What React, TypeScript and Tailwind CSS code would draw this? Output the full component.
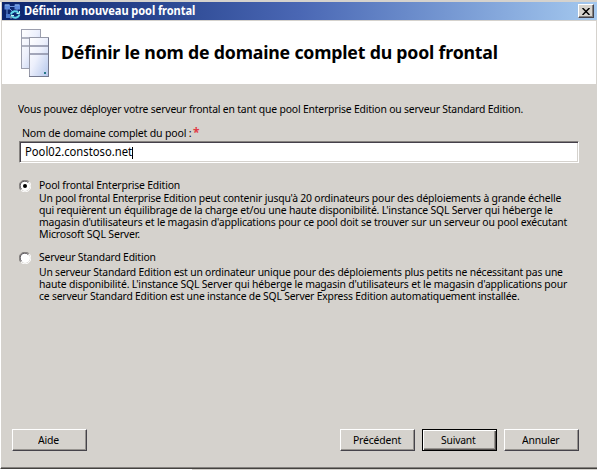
import { useLayoutEffect, useRef, useState } from "react";
import type { ReactNode } from "react";

/** One line of text, condensed horizontally to the given width. */
function FitText({ width, children, className = "" }: { width: number; children: ReactNode; className?: string }) {
  const ref = useRef<HTMLSpanElement>(null);
  const [scale, setScale] = useState(1);
  useLayoutEffect(() => {
    if (ref.current) setScale(width / ref.current.offsetWidth);
  }, [width]);
  return (
    <div className={`whitespace-nowrap ${className}`} style={{ width }}>
      <span ref={ref} className="inline-block origin-left" style={{ transform: `scaleX(${scale})` }}>
        {children}
      </span>
    </div>
  );
}

function Line({ width, children }: { width: number; children: ReactNode }) {
  return (
    <FitText width={width} className="h-3 text-[11.5px] leading-3 tracking-[-0.2px]">
      {children}
    </FitText>
  );
}

function Radio({ checked = false }: { checked?: boolean }) {
  return (
    <svg width="12" height="12" viewBox="0 0 12 12" className="mt-px shrink-0" role="radio" aria-checked={checked}>
      <circle cx="6" cy="6" r="5" fill="#fff" />
      <path d="M1.8 10.2A5.6 5.6 0 0 1 10.2 1.8" fill="none" stroke="#85827f" />
      <path d="M2.5 9.2A4.6 4.6 0 0 1 9.2 2.5" fill="none" stroke="#47434a" />
      <path d="M10.2 1.8A5.6 5.6 0 0 1 1.8 10.2" fill="none" stroke="#fff" />
      {checked && <circle cx="6" cy="6" r="2" fill="#000" />}
    </svg>
  );
}

function Button({ label, width, primary = false }: { label: string; width: number; primary?: boolean }) {
  return (
    <button
      className={`flex h-[22px] w-[75px] items-center justify-center pr-0.5 ${
        primary
          ? "border border-black shadow-[inset_1px_1px_#fff,inset_-1px_-1px_#55514f,inset_-2px_-2px_#96938f]"
          : "border border-t-white border-r-[#45434a] border-b-[#45434a] border-l-white shadow-[inset_-1px_-1px_#96938f]"
      }`}
    >
      <Line width={width}>{label}</Line>
    </button>
  );
}

function TitleIcon() {
  return (
    <svg width="17" height="17" viewBox="0 0 17 17" className="shrink-0">
      <path d="M3 5v8M5 3.5h7M5 5l5 5M13 5v4" stroke="#6f97dc" fill="none" />
      <rect x="0.5" y="1.5" width="5.5" height="5" fill="#5c8ade" />
      <rect x="10.5" y="1.5" width="5.5" height="5" fill="#5c8ade" />
      <rect x="2" y="11" width="4" height="4" fill="#4a78cc" />
      <path d="M1 2h4M11 2h4" stroke="#8fb6ea" />
      <path d="M7 11.5C8 7.5 12.500 7.5 14.500 10M15.500 11.5C14 15.500 9.500 15.500 8 13" stroke="#61d5e8" strokeWidth="2" fill="none" />
      <path d="M12.5 10.5h3V8M10 12.5H7v3" stroke="#b9f7f5" fill="none" />
    </svg>
  );
}

function ServersIcon() {
  return (
    <svg width="28" height="49" viewBox="0 0 28 49" className="shrink-0">
      <defs>
        <linearGradient id="face" x1="0" y1="0" x2="1" y2="1">
          <stop offset="0" stopColor="#ffffff" />
          <stop offset="0.45" stopColor="#edf0fc" />
          <stop offset="1" stopColor="#b4c7ec" />
        </linearGradient>
      </defs>
      <rect x="0.5" y="0.5" width="19" height="39" fill="url(#face)" stroke="#9c9fae" />
      <path d="M1 9h19M1 17h19" stroke="#999daf" strokeWidth="1.4" />
      <rect x="8.5" y="8.5" width="19" height="39" fill="url(#face)" stroke="#9699a8" />
      <path d="M9 17h18M9 25h18" stroke="#888ca2" strokeWidth="1.6" />
      <path d="M27.5 9v39M8 47.5h20" stroke="#74798e" />
      <rect x="23" y="43" width="2" height="2" fill="#267887" />
    </svg>
  );
}

export default function App() {
  return (
    <div className="flex h-[470px] w-[597px] flex-col overflow-hidden bg-[#d5d2cd] pt-0.5 font-['Noto_Sans',sans-serif] text-[12px] text-black">
      <div className="flex h-[467px] shrink-0 flex-col border-b border-l border-b-[#44423f] border-l-white pl-px shadow-[inset_0_-1px_#85827f]">
        <div className="flex h-[18px] shrink-0 items-center bg-linear-to-r from-[#0b246b] via-[#4a67b4] to-[#a5c9ef] pr-[3px] pl-0.5">
          <TitleIcon />
          <FitText width={171} className="ml-[3px] text-[12px] font-bold tracking-[-0.1px] text-white">Définir un nouveau pool frontal</FitText>
          <button className="ml-auto flex h-[14px] w-4 items-center justify-center border border-t-white border-r-[#45434a] border-b-[#45434a] border-l-white bg-[#d5d2cd] shadow-[inset_-1px_-1px_#85827f]">
            <svg width="8" height="7" viewBox="0 0 8 7"><path d="M0.5 0 7.5 7M7.5 0 0.5 7" stroke="#000" strokeWidth="1.5" /></svg>
          </button>
        </div>
        <header className="mt-px mr-px flex h-[63px] shrink-0 items-start bg-white pt-2 pl-[19px]">
          <ServersIcon />
          <h1 className="mt-[11px] ml-3">
            <FitText width={437} className="text-[18px] leading-6 font-bold tracking-[-0.2px]">Définir le nom de domaine complet du pool frontal</FitText>
          </h1>
        </header>
        <main className="flex flex-col pt-[19px] pl-4">
          <Line width={505}>Vous pouvez déployer votre serveur frontal en tant que pool Enterprise Edition ou serveur Standard Edition.</Line>
          <div className="mt-3 ml-1 flex h-[14px]">
            <Line width={169}>Nom de domaine complet du pool :</Line>
            <span className="ml-[2px] text-[12px] font-bold leading-3 text-[#e23b45]">*</span>
          </div>
          <div className="ml-px flex h-[22px] w-[560px] items-center border border-t-[#85827f] border-r-white border-b-white border-l-[#85827f] bg-white pt-px pl-[5px] shadow-[inset_1px_1px_#45404a,inset_-1px_-1px_#d5d2cd]">
            <FitText width={107} className="text-[12.5px]">Pool02.constoso.net</FitText>
            <span className="h-3 w-px bg-black" />
          </div>
          <section className="mt-4 flex gap-2 pl-px">
            <Radio checked />
            <div>
              <Line width={141}>Pool frontal Enterprise Edition</Line>
              <div className="mt-px">
                <Line width={522}>Un pool frontal Enterprise Edition peut contenir jusqu'à 20 ordinateurs pour des déploiements à grande échelle</Line>
                <Line width={514}>qui requièrent un équilibrage de la charge et/ou une haute disponibilité. L'instance SQL Server qui héberge le</Line>
                <Line width={528}>magasin d'utilisateurs et le magasin d'applications pour ce pool doit se trouver sur un serveur ou pool exécutant</Line>
                <Line width={101}>Microsoft SQL Server.</Line>
              </div>
            </div>
          </section>
          <section className="mt-[11px] flex gap-2 pl-px">
            <Radio />
            <div>
              <Line width={117}>Serveur Standard Edition</Line>
              <div className="mt-[3px]">
                <Line width={524}>Un serveur Standard Edition est un ordinateur unique pour des déploiements plus petits ne nécessitant pas une</Line>
                <Line width={528}>haute disponibilité. L'instance SQL Server qui héberge le magasin d'utilisateurs et le magasin d'applications pour</Line>
                <Line width={481}>ce serveur Standard Edition est une instance de SQL Server Express Edition automatiquement installée.</Line>
              </div>
            </div>
          </section>
        </main>
        <footer className="mt-auto mb-[17px] flex gap-[7px] pr-[18px] pl-[10px]">
          <div className="mr-auto"><Button label="Aide" width={21} /></div>
          <Button label="Précédent" width={48} />
          <Button label="Suivant" width={35} primary />
          <Button label="Annuler" width={37} />
        </footer>
      </div>
      <div className="h-px w-48 shrink-0 bg-white" />
    </div>
  );
}
